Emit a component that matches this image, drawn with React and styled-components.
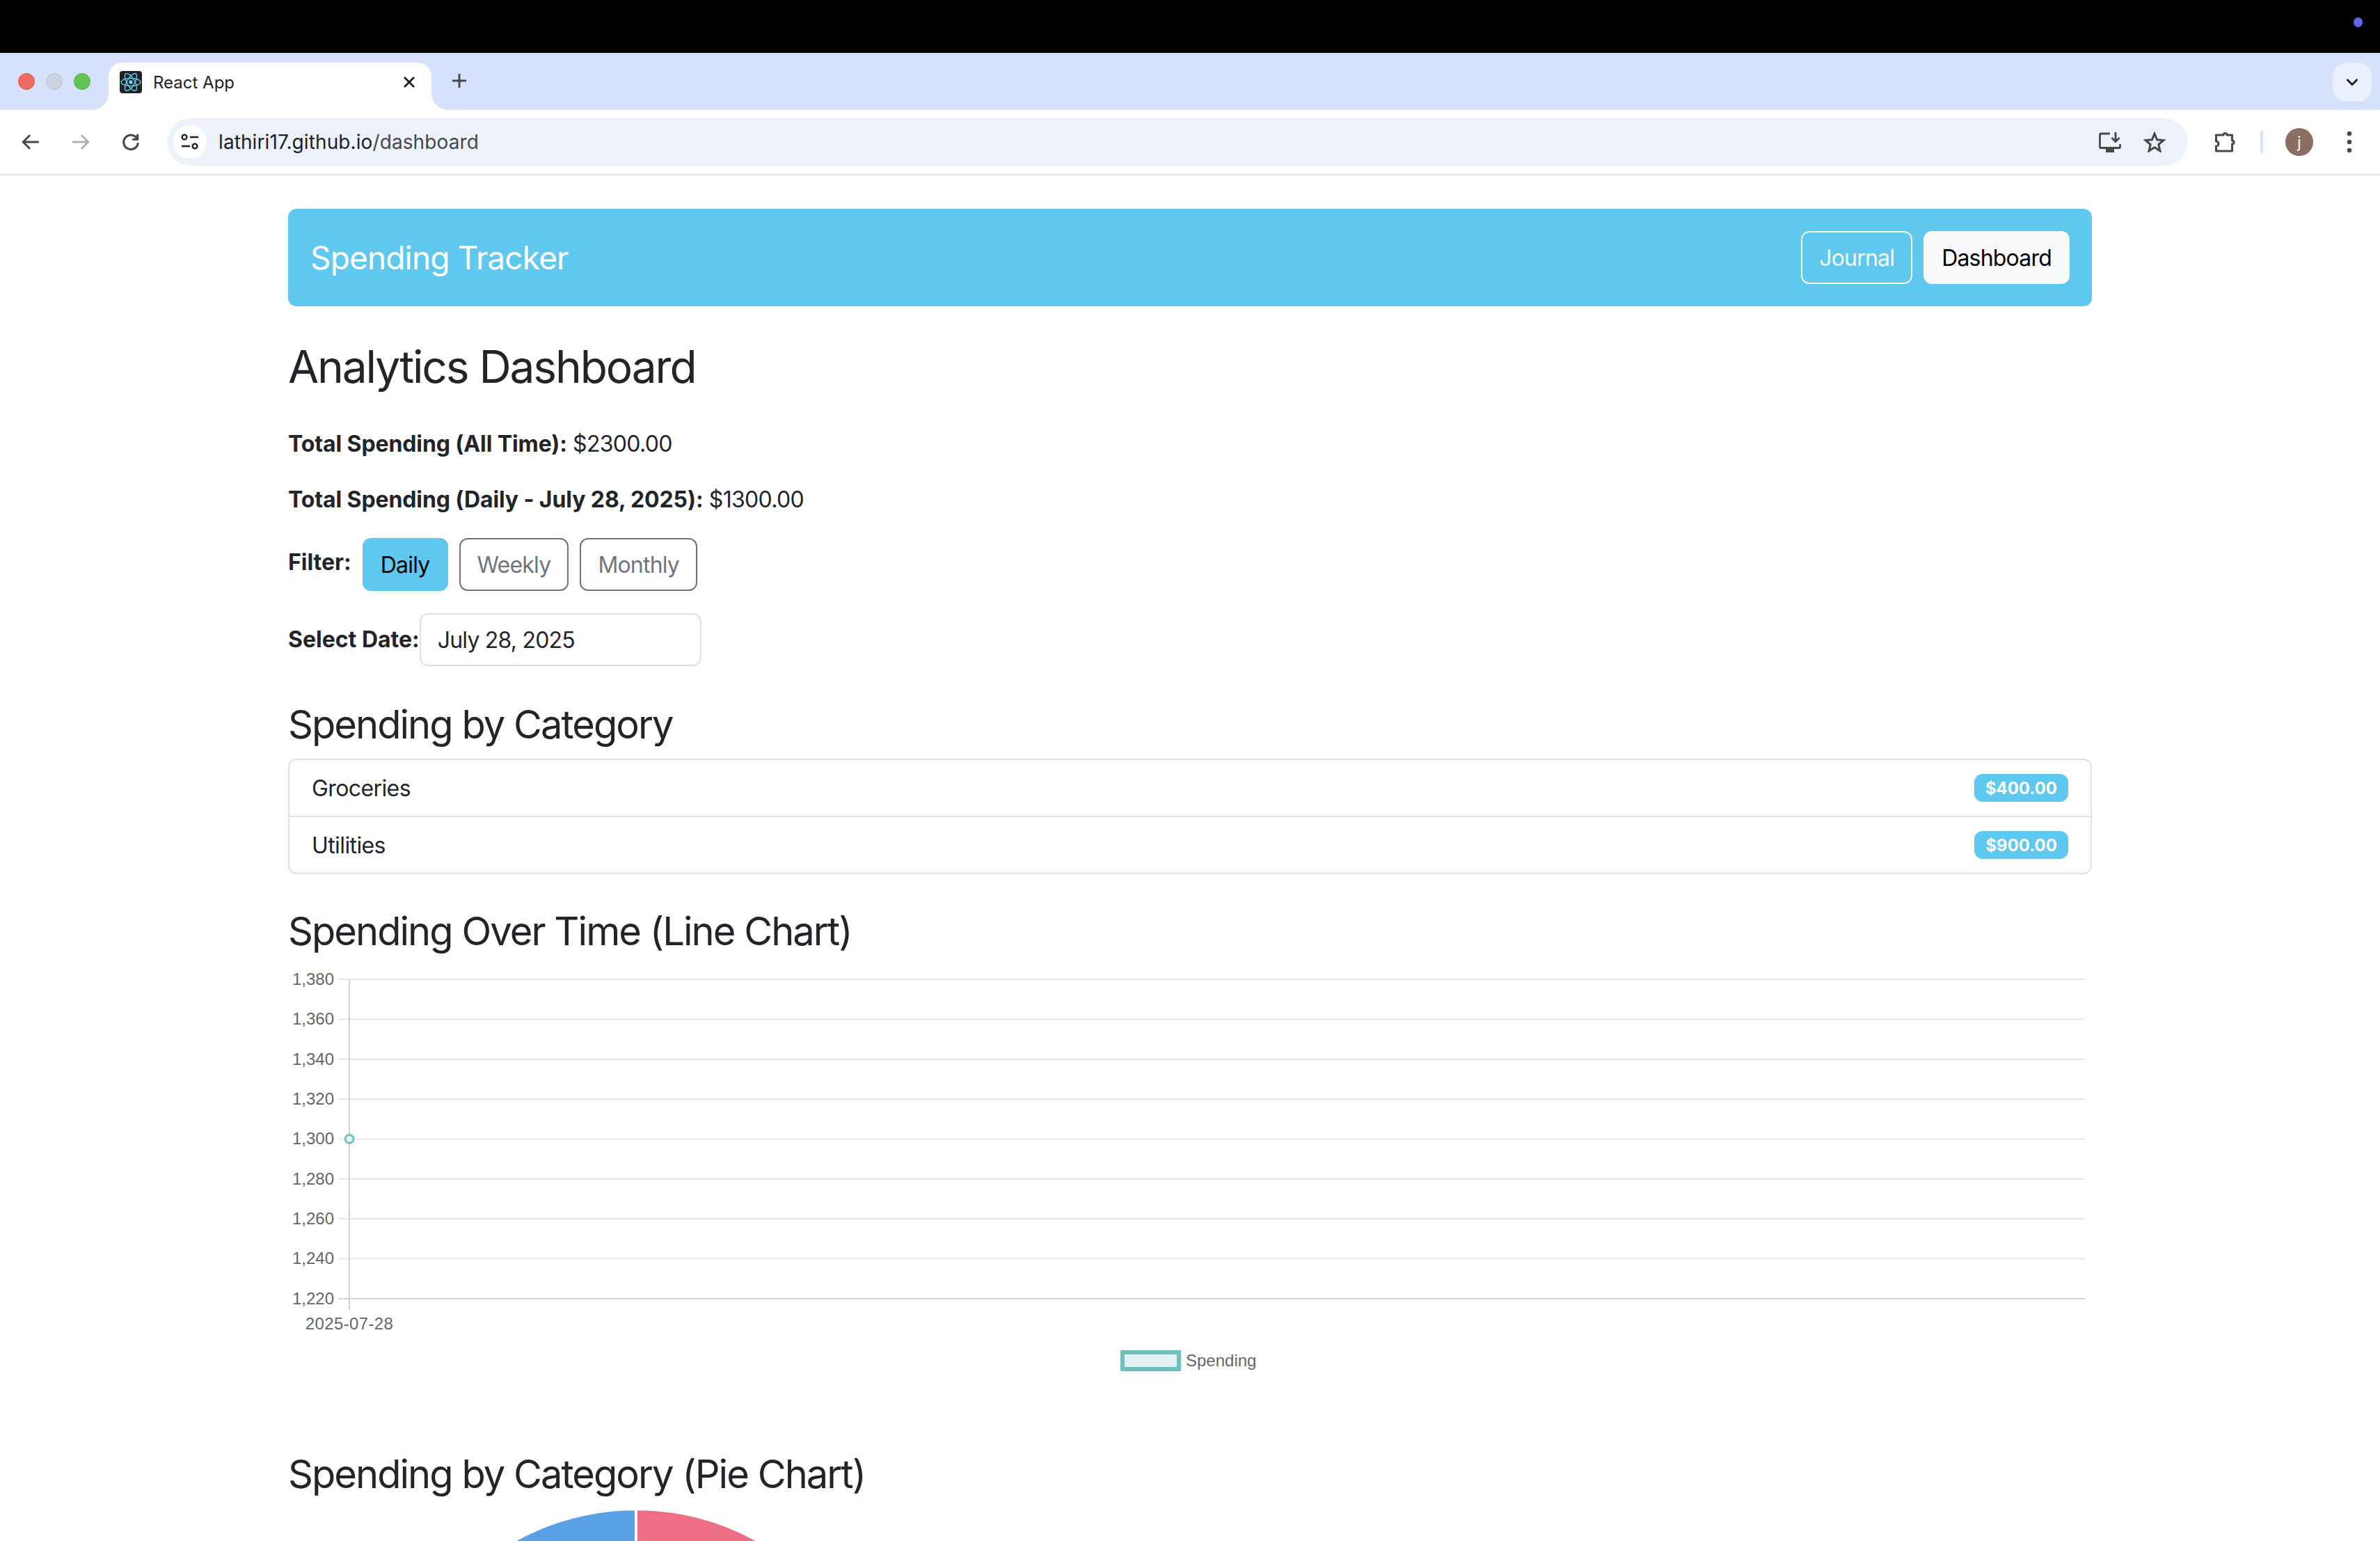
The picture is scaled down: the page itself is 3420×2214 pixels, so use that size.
import React from 'react';
import styled, { createGlobalStyle } from 'styled-components';

const GlobalStyle = createGlobalStyle`
  html, body {
    margin: 0;
    height: 2214px;
    overflow: hidden;
    background: #fff;
    font-family: Inter, "Liberation Sans", sans-serif;
    color: #212529;
  }
`;

const ACCENT = '#5ec8ee';

// Browser chrome
const TopBar = styled.div`
  height: 76px;
  background: #000;
  display: flex;
  justify-content: flex-end;
  align-items: center;
  padding-right: 25px;
`;

const RecordDot = styled.span`
  width: 13px;
  height: 14px;
  margin-bottom: 12px;
  border-radius: 50%;
  background: #6366e8;
`;

const TabStrip = styled.div`
  height: 82px;
  background: #d6e2fb;
  display: flex;
  align-items: flex-start;
`;

const Lights = styled.div`
  display: flex;
  gap: 16px;
  padding: 29px 26px 0;
`;

const Light = styled.span`
  width: 24px;
  height: 24px;
  border-radius: 50%;
  box-sizing: border-box;
  background: ${(p) => p.$color};
  border: 1px solid ${(p) => p.$edge};
`;

const Tab = styled.div`
  position: relative;
  margin-top: 14px;
  width: 464px;
  height: 68px;
  box-sizing: border-box;
  padding: 12px 22px 24px 16px;
  display: flex;
  align-items: center;
  background: #fff;
  border-radius: 20px 20px 0 0;

  &::before,
  &::after {
    content: '';
    position: absolute;
    bottom: 0;
    width: 24px;
    height: 24px;
  }
  &::before {
    left: -24px;
    background: radial-gradient(circle at 0 0, transparent 23.5px, #fff 24px);
  }
  &::after {
    right: -24px;
    background: radial-gradient(circle at 100% 0, transparent 23.5px, #fff 24px);
  }
`;

const TabTitle = styled.span`
  flex: 1;
  margin-left: 16px;
  font-size: 24px;
  color: #1f1f1f;
`;

const NewTab = styled.div`
  margin: 28px 0 0 28px;
  width: 24px;
  height: 24px;
  display: flex;
`;

const TabSearch = styled.div`
  margin: 14px 12px 0 auto;
  width: 56px;
  height: 56px;
  border-radius: 20px;
  background: #e9effb;
  display: flex;
  align-items: center;
  justify-content: center;
`;

const Toolbar = styled.div`
  height: 94px;
  box-sizing: border-box;
  padding: 0 8px;
  display: flex;
  align-items: center;
  background: #fff;
  border-bottom: 2px solid #e2e2e2;
  border-radius: 16px 16px 0 0;
`;

const ToolButton = styled.div`
  width: ${(p) => p.$width || 72}px;
  height: 72px;
  flex: none;
  display: flex;
  align-items: center;
  justify-content: center;
`;

const Omnibox = styled.div`
  flex: 1;
  height: 68px;
  margin: 0 17px 0 16px;
  padding: 0 16px 0 9px;
  border-radius: 34px;
  background: #edf2fa;
  display: flex;
  align-items: center;
`;

const SiteInfo = styled.div`
  width: 48px;
  height: 48px;
  border-radius: 50%;
  background: #fff;
  display: flex;
  align-items: center;
  justify-content: center;
`;

const Url = styled.div`
  flex: 1;
  margin-left: 17px;
  font-size: 28px;
  letter-spacing: 0.1px;
  color: #1f1f1f;

  span {
    color: #474747;
  }
`;

const Divider = styled.span`
  width: 4px;
  height: 32px;
  margin: 0 16px 0 15px;
  border-radius: 2px;
  background: #d3e3fd;
`;

const Avatar = styled.div`
  width: 40px;
  height: 40px;
  border-radius: 50%;
  background: #8a6e62;
  color: #fff;
  font-size: 22px;
  display: flex;
  align-items: center;
  justify-content: center;
`;

// Page
const Page = styled.main`
  width: 2592px;
  margin: 0 auto;
  padding-top: 48px;
`;

const Navbar = styled.nav`
  height: 140px;
  box-sizing: border-box;
  padding: 32px;
  display: flex;
  align-items: center;
  justify-content: space-between;
  background: ${ACCENT};
  border-radius: 12px;
`;

const Brand = styled.div`
  font-size: 46px;
  letter-spacing: -0.85px;
  color: #fff;
`;

const NavLinks = styled.div`
  display: flex;
  gap: 16px;
`;

const Button = styled.button`
  height: 76px;
  padding: 0 24px;
  box-sizing: border-box;
  font: inherit;
  font-size: 32px;
  letter-spacing: -0.8px;
  border-radius: 12px;
  border: 2px solid ${(p) => p.$border};
  background: ${(p) => p.$bg || 'transparent'};
  color: ${(p) => p.$color};
`;

const PageTitle = styled.h2`
  margin: 48px 0 47px;
  font-size: 64px;
  line-height: 78px;
  font-weight: 400;
  letter-spacing: -2.1px;
`;

const Stat = styled.p`
  margin: 0 0 30px;
  font-size: 32px;
  line-height: 50px;
  letter-spacing: -0.7px;

  strong {
    font-weight: 700;
    letter-spacing: -0.1px;
  }
`;

const FilterRow = styled.div`
  display: flex;
  gap: 16px;
  margin-bottom: 32px;
`;

const FieldLabel = styled.label`
  font-size: 32px;
  font-weight: 700;
  line-height: 70px;
`;

const DateRow = styled.div`
  display: flex;
  align-items: center;
  height: 76px;
`;

const DateField = styled.div`
  width: 405px;
  height: 76px;
  box-sizing: border-box;
  padding-left: 24px;
  display: flex;
  align-items: center;
  font-size: 32px;
  letter-spacing: -0.8px;
  border: 2px solid #dee2e6;
  border-radius: 12px;
`;

const SectionTitle = styled.h3`
  margin: ${(p) => p.$top}px 0 14px;
  font-size: 56px;
  line-height: 69px;
  font-weight: 400;
  letter-spacing: -1.95px;
`;

const CategoryList = styled.ul`
  margin: 0;
  padding: 0;
  list-style: none;
  border: 2px solid #dee2e6;
  border-radius: 12px;
`;

const CategoryItem = styled.li`
  height: 80px;
  box-sizing: border-box;
  padding: 0 32px;
  display: flex;
  align-items: center;
  justify-content: space-between;
  font-size: 32px;
  letter-spacing: -0.6px;

  & + & {
    height: 82px;
    border-top: 2px solid #dee2e6;
  }
`;

const Badge = styled.span`
  height: 40px;
  padding: 0 16px;
  display: flex;
  align-items: center;
  font-size: 24px;
  font-weight: 700;
  letter-spacing: 0;
  color: #fff;
  background: ${ACCENT};
  border-radius: 12px;
`;

const ChartBox = styled.svg`
  display: block;
  width: 2592px;
  height: ${(p) => p.$height}px;
  font-family: "Liberation Sans", Arial, sans-serif;
  font-size: 24px;
  fill: #666;
`;

const DateTick = styled.text`
  letter-spacing: 0.35px;
`;

// Icons
const Svg = ({ w = 24, h = 24, vb = '0 0 24 24', children, stroke = '#474747', sw = 2 }) => (
  <svg width={w} height={h} viewBox={vb} fill="none" stroke={stroke} strokeWidth={sw}>
    {children}
  </svg>
);

const ReactLogo = () => (
  <svg width="32" height="32" viewBox="0 0 32 32">
    <rect width="32" height="32" rx="4" fill="#222" />
    <g fill="none" stroke="#61dafb" strokeWidth="1.3">
      <ellipse cx="16" cy="16" rx="14" ry="5.6" />
      <ellipse cx="16" cy="16" rx="14" ry="5.6" transform="rotate(60 16 16)" />
      <ellipse cx="16" cy="16" rx="14" ry="5.6" transform="rotate(120 16 16)" />
    </g>
    <circle cx="16" cy="16" r="2.7" fill="#61dafb" />
  </svg>
);

const ArrowIcon = ({ right, color }) => (
  <Svg w={26} h={26} stroke={color} sw={2.6}>
    <path d={right ? 'M1 12H22M13 3L22 12L13 21' : 'M23 12H2M11 3L2 12L11 21'} />
  </Svg>
);

const TuneIcon = () => (
  <Svg w={26} h={24} vb="0 0 26 24" stroke="#1f1f1f" sw={2.4}>
    <circle cx="5" cy="5" r="3.4" />
    <path d="M13 5H25M1 18H13" />
    <circle cx="20" cy="18" r="3.4" />
  </Svg>
);

const GRID_VALUES = [1380, 1360, 1340, 1320, 1300, 1280, 1260, 1240, 1220];

const LineChart = () => (
  <ChartBox $height={649} viewBox="0 0 2592 649">
    {GRID_VALUES.map((value, i) => {
      const y = 20 + i * 57.35;
      return (
        <g key={value}>
          <line x1="72" x2="2582" y1={y} y2={y} stroke={i === 8 ? '#cfcfcf' : '#e6e6e6'} strokeWidth="2" fill="none" />
          <text x="66" y={y + 8} textAnchor="end">{value.toLocaleString('en-US')}</text>
        </g>
      );
    })}
    <line x1="88" x2="88" y1="20" y2="495" stroke="#cfcfcf" strokeWidth="2" />
    <circle cx="88" cy="249.4" r="6" fill="#e0f2f2" stroke="#6fc4c4" strokeWidth="3" />
    <DateTick x="88" y="523" textAnchor="middle">2025-07-28</DateTick>
    <rect x="1199" y="556" width="81" height="24" fill="#e0f2f1" stroke="#6fbfbf" strokeWidth="6" />
    <text x="1290" y="576">Spending</text>
  </ChartBox>
);

const polar = (cx, cy, r, deg) => {
  const a = ((deg - 90) * Math.PI) / 180;
  return [cx + r * Math.cos(a), cy + r * Math.sin(a)];
};

const slice = (cx, cy, r, from, to) => {
  const [x1, y1] = polar(cx, cy, r, from);
  const [x2, y2] = polar(cx, cy, r, to);
  return `M${cx} ${cy}L${x1} ${y1}A${r} ${r} 0 ${to - from > 180 ? 1 : 0} 1 ${x2} ${y2}Z`;
};

// only the top of the pie is inside the window
const PieChart = () => (
  <ChartBox $height={47} viewBox="0 0 2592 47">
    <path d={slice(500, 359, 358, 0, 110.8)} fill="#ee6e86" stroke="#fff" strokeWidth="4" />
    <path d={slice(500, 359, 358, 110.8, 360)} fill="#5aa0e4" stroke="#fff" strokeWidth="4" />
  </ChartBox>
);

const App = () => (
  <>
    <GlobalStyle />
    <TopBar>
      <RecordDot />
    </TopBar>
    <TabStrip>
      <Lights>
        <Light $color="#ed6a5e" $edge="#d5584c" />
        <Light $color="#ccd3e2" $edge="#b8bfce" />
        <Light $color="#61c554" $edge="#52ad46" />
      </Lights>
      <Tab>
        <ReactLogo />
        <TabTitle>React App</TabTitle>
        <Svg w={20} h={20} vb="0 0 20 20" stroke="#1f1f1f" sw={2.8}>
          <path d="M3 3L17 17M17 3L3 17" />
        </Svg>
      </Tab>
      <NewTab>
        <Svg stroke="#474747" sw={3}>
          <path d="M12 2V22M2 12H22" />
        </Svg>
      </NewTab>
      <TabSearch>
        <Svg w={18} h={12} vb="0 0 18 12" stroke="#1f1f1f" sw={2.8}>
          <path d="M1.5 2L9 9.5L16.5 2" />
        </Svg>
      </TabSearch>
    </TabStrip>
    <Toolbar>
      <ToolButton>
        <ArrowIcon color="#474747" />
      </ToolButton>
      <ToolButton>
        <ArrowIcon right color="#b1b1b1" />
      </ToolButton>
      <ToolButton>
        <Svg w={26} h={26} sw={2.8}>
          <path d="M20.5 8A9.5 9.5 0 1 0 21.5 13" />
          <path d="M21 1.5V8.5H14" />
        </Svg>
      </ToolButton>
      <Omnibox>
        <SiteInfo>
          <TuneIcon />
        </SiteInfo>
        <Url>
          lathiri17.github.io<span>/dashboard</span>
        </Url>
        <ToolButton $width={64}>
          <Svg w={32} h={30} vb="0 0 32 30" sw={2.8}>
            <path d="M16 3H3A1.5 1.5 0 0 0 1.5 4.5V22A1.5 1.5 0 0 0 3 23.5H29A1.5 1.5 0 0 0 30.5 22V18" />
            <path d="M10 27.5H22" strokeWidth="5" />
            <path d="M24 1V14M18.5 9L24 14.5L29.5 9" />
          </Svg>
        </ToolButton>
        <ToolButton $width={64}>
          <Svg w={32} h={30} vb="0 0 32 30" sw={3}>
            <path d="M16 3L19.6 11.8L29 12.5L21.8 18.5L24 27.8L16 22.8L8 27.8L10.2 18.5L3 12.5L12.4 11.8Z" />
          </Svg>
        </ToolButton>
      </Omnibox>
      <ToolButton>
        <Svg w={32} h={32} vb="0 0 32 32" sw={3}>
          <path d="M11 6H14A2.5 2.5 0 1 1 19 6H26.5V14A2.5 2.5 0 1 1 26.5 19V29H3.5V22A3.5 3.5 0 0 0 3.5 15V6Z" strokeLinejoin="round" />
        </Svg>
      </ToolButton>
      <Divider />
      <ToolButton>
        <Avatar>j</Avatar>
      </ToolButton>
      <ToolButton>
        <svg width="8" height="32" viewBox="0 0 8 32" fill="#474747">
          <circle cx="4" cy="4" r="3.2" />
          <circle cx="4" cy="16" r="3.2" />
          <circle cx="4" cy="28" r="3.2" />
        </svg>
      </ToolButton>
    </Toolbar>
    <Page>
      <Navbar>
        <Brand>Spending Tracker</Brand>
        <NavLinks>
          <Button $border="#f8f9fa" $color="#f8f9fa">Journal</Button>
          <Button $border="#f8f9fa" $bg="#f8f9fa" $color="#000">Dashboard</Button>
        </NavLinks>
      </Navbar>
      <PageTitle>Analytics Dashboard</PageTitle>
      <Stat>
        <strong>Total Spending (All Time):</strong> $2300.00
      </Stat>
      <Stat>
        <strong>Total Spending (Daily - July 28, 2025):</strong> $1300.00
      </Stat>
      <FilterRow>
        <FieldLabel>Filter:</FieldLabel>
        <Button $border={ACCENT} $bg={ACCENT} $color="#000">Daily</Button>
        <Button $border="#6c757d" $color="#6c757d">Weekly</Button>
        <Button $border="#6c757d" $color="#6c757d">Monthly</Button>
      </FilterRow>
      <DateRow>
        <FieldLabel>Select Date:</FieldLabel>
        <DateField>July 28, 2025</DateField>
      </DateRow>
      <SectionTitle $top={50}>Spending by Category</SectionTitle>
      <CategoryList>
        <CategoryItem>
          Groceries
          <Badge>$400.00</Badge>
        </CategoryItem>
        <CategoryItem>
          Utilities
          <Badge>$900.00</Badge>
        </CategoryItem>
      </CategoryList>
      <SectionTitle $top={48}>Spending Over Time (Line Chart)</SectionTitle>
      <LineChart />
      <SectionTitle $top={48}>Spending by Category (Pie Chart)</SectionTitle>
      <PieChart />
    </Page>
  </>
);

export default App;
